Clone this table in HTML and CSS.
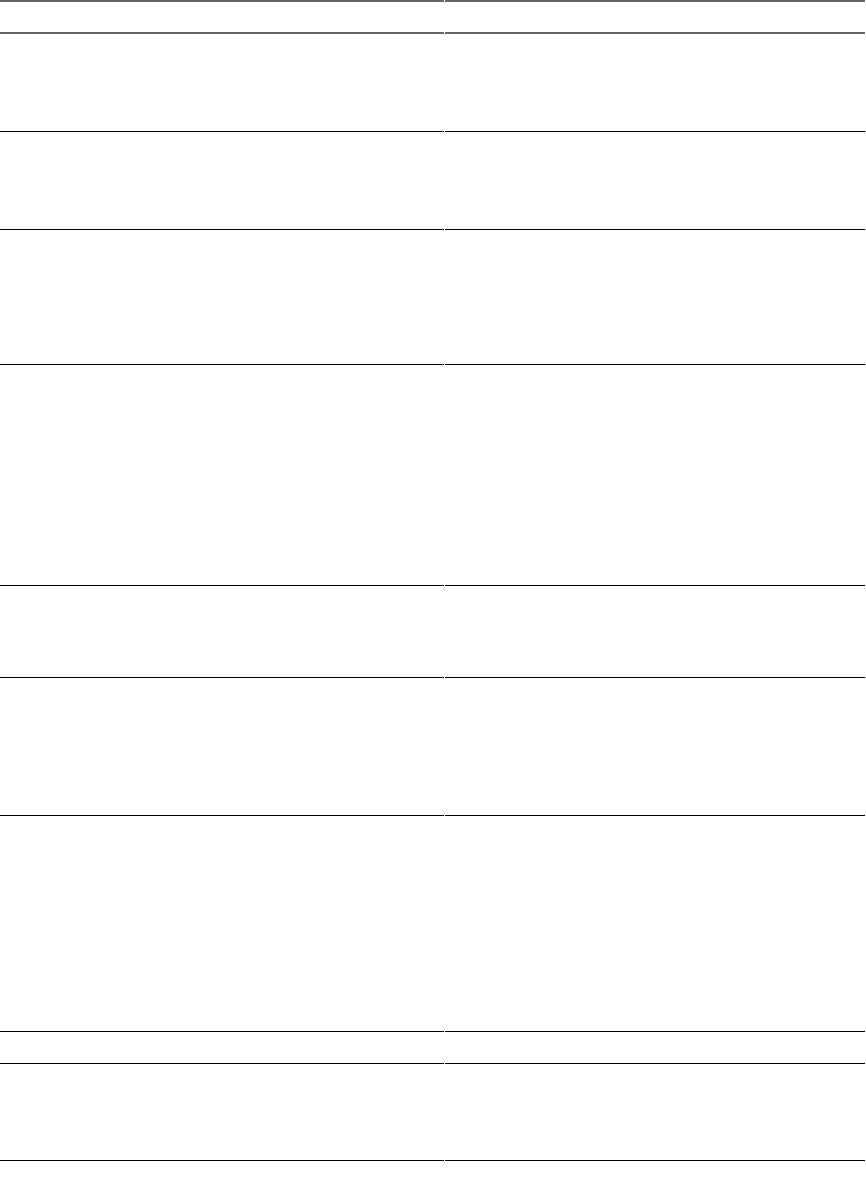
FILE: index.html
```html
<!DOCTYPE html>
<html lang="en">
<head>
<meta charset="utf-8">
<title>Table</title>
<link rel="stylesheet" href="styles.css">
</head>
<body>
<div class="table">
  <div class="cell head"></div><div class="cell head"></div>
  <div class="cell r1"></div><div class="cell r1"></div>
  <div class="cell r2"></div><div class="cell r2"></div>
  <div class="cell r3"></div><div class="cell r3"></div>
  <div class="cell r4"></div><div class="cell r4"></div>
  <div class="cell r5"></div><div class="cell r5"></div>
  <div class="cell r6"></div><div class="cell r6"></div>
  <div class="cell r7"></div><div class="cell r7"></div>
  <div class="cell r8"></div><div class="cell r8"></div>
  <div class="cell r9"></div><div class="cell r9"></div>
</div>
</body>
</html>
```
FILE: styles.css
```css
html, body {
  margin: 0;
  padding: 0;
  background: #ffffff;
  font-family: "Liberation Sans", Arial, sans-serif;
}
.table {
  display: grid;
  grid-template-columns: 444px 420px;
  column-gap: 1px;
  width: 865px;
}
.cell {
  box-sizing: border-box;
  border-bottom: 1px solid #000000;
}
.head {
  height: 34px;
  border-top: 2px solid #666666;
  border-bottom: 2px solid #666666;
}
.r1 { height: 98px; }
.r2 { height: 98px; }
.r3 { height: 135px; }
.r4 { height: 221px; }
.r5 { height: 92px; }
.r6 { height: 138px; }
.r7 { height: 216px; }
.r8 { height: 32px; }
.r9 { height: 97px; }
```
